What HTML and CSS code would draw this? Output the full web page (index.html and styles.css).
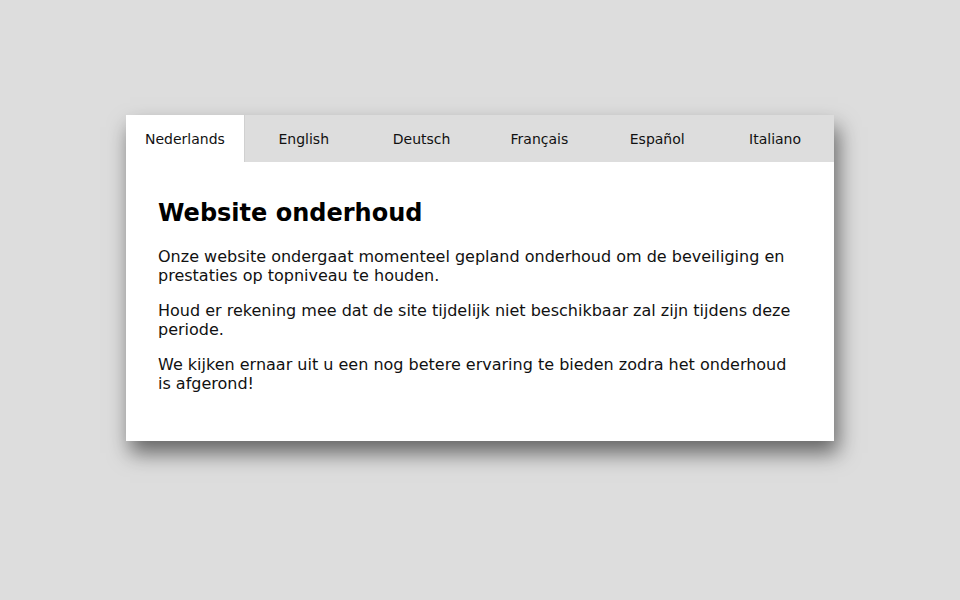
FILE: index.html
```html
<!DOCTYPE html>
<html lang="nl">
  <head>
    <meta charset="UTF-8" />
    <meta name="viewport" content="width=device-width, initial-scale=1.0" />
    <title>Website onderhoud</title>
    <link rel="stylesheet" href="styles.css">
  </head>
  <body>
    <div class="card">
      <nav class="tabs">
        <button type="button" class="tab active">Nederlands</button>
        <button type="button" class="tab">English</button>
        <button type="button" class="tab">Deutsch</button>
        <button type="button" class="tab">Français</button>
        <button type="button" class="tab">Español</button>
        <button type="button" class="tab">Italiano</button>
      </nav>

      <section class="content">
        <h2>Website onderhoud</h2>
        <p>Onze website ondergaat momenteel gepland onderhoud om de beveiliging en prestaties op topniveau te houden.</p>
        <p>Houd er rekening mee dat de site tijdelijk niet beschikbaar zal zijn tijdens deze periode.</p>
        <p>We kijken ernaar uit u een nog betere ervaring te bieden zodra het onderhoud is afgerond!</p>
      </section>
    </div>
  </body>
</html>
```

FILE: styles.css
```css
body {
  margin: 0;
  padding-top: 115px;
  min-height: 100vh;
  box-sizing: border-box;
  background-color: #dddddd;
  font-family: "DejaVu Sans", sans-serif;
  color: #111;
}

.card {
  width: 708px;
  margin: 0 auto;
  background-color: white;
  box-shadow: 4px 12px 20px rgba(0, 0, 0, 0.55);
}

.tabs {
  display: flex;
  background-color: #dddddd;
}

.tab {
  flex: 1;
  height: 47px;
  padding: 0;
  border: none;
  background: none;
  font-family: inherit;
  font-size: 14px;
  color: #111;
  cursor: pointer;
}

.tab.active {
  background-color: white;
  border-right: 1px solid #d0d0d0;
}

.content {
  padding: 37px 32px 32px;
}

h2 {
  margin: 0 0 20px;
  font-size: 24px;
  color: black;
}

p {
  margin: 0 0 16px;
  font-size: 16px;
  line-height: 19px;
}
```
